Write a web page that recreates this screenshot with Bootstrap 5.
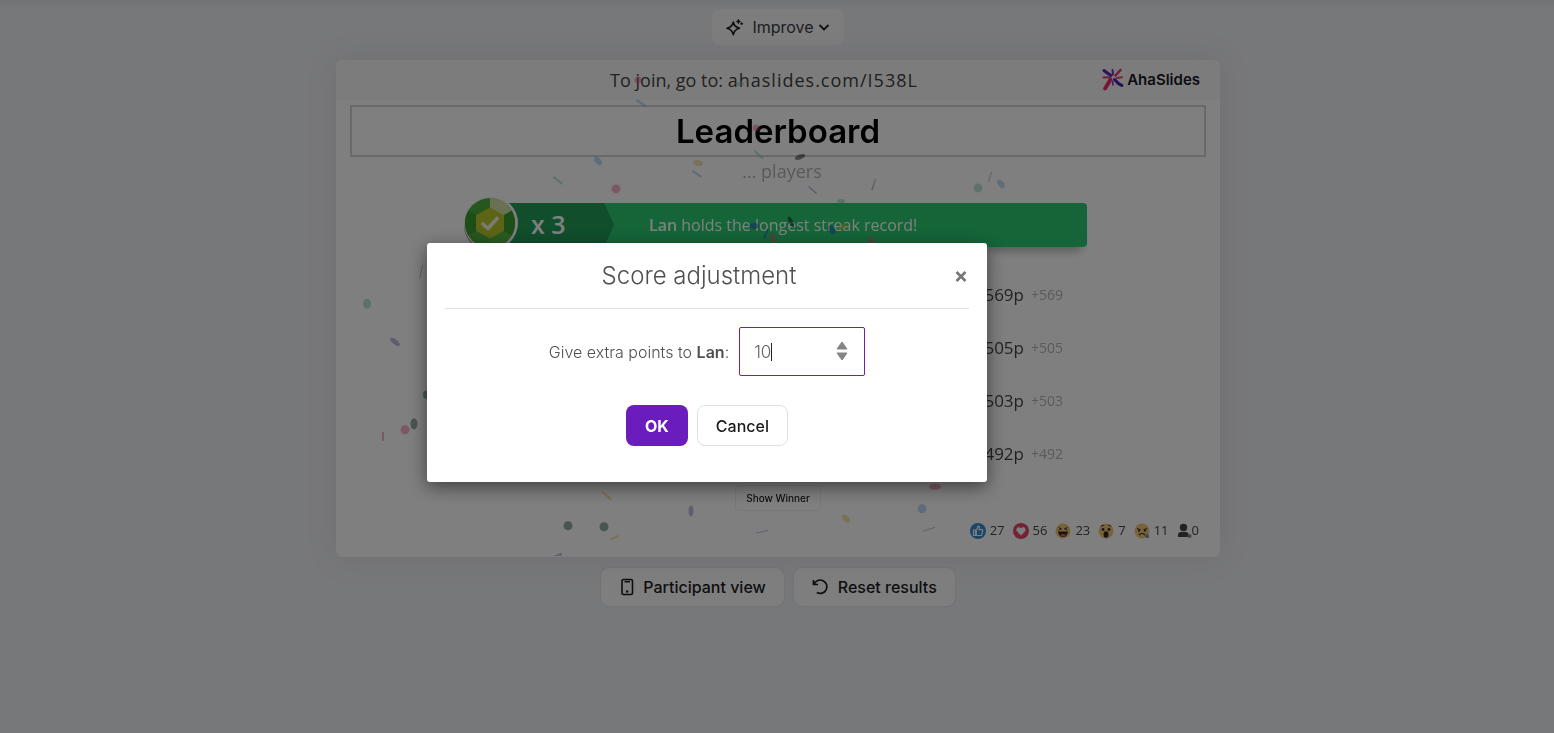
<!DOCTYPE html>
<html lang="en">
<head>
<meta charset="utf-8">
<meta name="viewport" content="width=device-width, initial-scale=1">
<title>Leaderboard</title>
<link href="https://cdn.jsdelivr.net/npm/bootstrap@5.3.0/dist/css/bootstrap.min.css" rel="stylesheet">
<style>
  :root { --ui: Inter, "Liberation Sans", sans-serif; --slide: "Open Sans", "Noto Sans", sans-serif; }
  body { min-height: 100vh; font-family: var(--ui); color: #1c1c22; background: linear-gradient(#e4e6ea, #eff0f3 8px, #eff0f4 100%) no-repeat #eff0f4; }
  .editor { padding: 9px 0 0 2px; }
  .btn-soft { --bs-btn-bg: #fdfdfe; --bs-btn-hover-bg: #fff; --bs-btn-color: #1c1c22; border: 0; border-radius: 8px; display: inline-flex; align-items: center; justify-content: center; font-size: 16px; line-height: 24px; }
  .btn-improve { --bs-btn-bg: #fafafb; --bs-btn-color: #3c3c44; height: 36px; padding: 0 14px; }
  .btn-action { height: 38px; padding: 0 18px; font-weight: 500; box-shadow: 0 0 2px rgba(0,0,0,.15); }
  .slide { width: 100%; max-width: 884px; margin-top: 15px; background: #fff; border-radius: 6px; overflow: hidden; font-family: var(--slide); color: #444; }
  .slide-wrap { filter: drop-shadow(0 0 16px rgba(0,0,30,.07)); }
  .join { height: 40px; background: #f9f9f9; font-size: 18px; }
  .join a { color: #404040; letter-spacing: 1px; font-weight: 500; text-decoration: none; }
  .join-text { margin-right: 28px; }
  .brand { position: absolute; right: 20px; gap: 3px; font: 600 15px/20px var(--ui); color: #18181f; }
  .slide-title { margin: 5px 14px 0; border: 2px solid #d2d3d6; height: 52px; font: 600 33px/48px var(--ui); color: #000; }
  .players { color: #b2b2b2; font-size: 18px; line-height: 28px; }
  .streak { position: relative; margin: 18px 133px 0 155px; height: 44px; border-radius: 4px; background: #2acb72; color: #fff; font-size: 16px; box-shadow: 0 10px 10px -6px rgba(0,0,0,.3); }
  .streak-count { width: 123px; height: 100%; padding-left: 40px; background: #209c59; clip-path: polygon(0 0, 113px 0, 100% 50%, 113px 100%, 0 100%); font-size: 25px; font-weight: 600; }
  .streak-note { margin-left: 35px; }
  .streak-badge { position: absolute; left: -28px; top: -8px; }
  .scores { margin: 21px 157px 0 0; }
  .scores li { height: 53px; font-size: 17px; }
  .scores small { color: #b4b4b4; font-size: 14px; margin-left: 7px; }
  .winner { padding-top: 4px; }
  .btn-winner { --bs-btn-color: #222; border: 1px solid #f0f0f0; font: 500 10px/24px Inter, sans-serif; padding: 0 10px; border-radius: 4px; }
  .reactions { height: 24px; margin: 8px 21px 14px 0; font-size: 13px; gap: 8px; }
  .confetti { position: absolute; inset: 0; width: 100%; height: 100%; pointer-events: none; opacity: .45; }
  .actions { gap: 10px; margin-top: 11px; }
  .score-modal { padding: 0 140px 8px 0; }
  .score-modal .modal-dialog { max-width: 560px; }
  .score-modal .modal-content { border: 0; border-radius: 3px; padding: 0 18px 36px; box-shadow: 0 5px 18px rgba(0,0,0,.5); color: #5f5f63; }
  .score-modal .modal-header { padding: 0; height: 66px; border-bottom: 1px solid #dedee2; border-radius: 0; }
  .score-modal .modal-title { font-size: 24px; font-weight: 300; line-height: 30px; color: #505054; }
  .close-x { border: 0; background: none; color: #77777b; padding: 0; width: 16px; height: 20px; }
  .points-row { margin-top: 18px; gap: 10px; }
  .points-row label { font-weight: 300; color: #505054; }
  .points-input { width: 126px; height: 49px; border: 1px solid #7020a8; border-radius: 2px; font-size: 17px; font-weight: 300; color: #63636f; padding: 0 14px; appearance: textfield; -moz-appearance: textfield; outline: 0; }
  .points-input::-webkit-inner-spin-button { appearance: none; -webkit-appearance: none; }
  .caret { position: absolute; left: 32px; top: 16px; width: 1px; height: 18px; background: #222; }
  .spin { position: absolute; right: 17px; top: 14px; }
  .modal-actions { margin-top: 29px; gap: 9px; }
  .modal-actions .btn { height: 41px; padding: 0 18px; border-radius: 8px; font-size: 16px; }
  .btn-ok { --bs-btn-bg: #6a1cbc; --bs-btn-color: #fff; --bs-btn-hover-bg: #5a12a8; --bs-btn-hover-color: #fff; font-weight: 700; }
  .btn-cancel { border: 1px solid #e0e0e4; color: #1c1c1c; font-weight: 500; }
  .modal-backdrop { --bs-backdrop-opacity: .5; }
</style>
</head>
<body>
<main class="editor d-flex flex-column align-items-center">
  <button class="btn btn-soft btn-improve" type="button">
    <svg class="me-2" width="18" height="18" viewBox="0 0 18 18" fill="none" stroke="#1c1c22" stroke-width="1.6" stroke-linejoin="round"><path d="M7.3 4Q8.2 9 13.5 10.3Q8.2 11.5 7.3 16.7Q6.2 11.5 1 10.3Q6.2 9 7.3 4Z"/><path d="M12.4 1l.6 1.8 1.7.7-1.7.7-.6 1.7-.6-1.7-1.7-.7 1.700-.7zM15.700 4.300l.4 1 1 .4-1 .4-.4 1-.4-1-1-.4 1-.4z" fill="#1c1c22" stroke-width=".6"/></svg>
    Improve
    <svg class="ms-1" width="12" height="12" viewBox="0 0 12 12" fill="none" stroke="#1c1c22" stroke-width="1.800"><path d="M1.500 4 6 8.400 10.500 4"/></svg>
  </button>

  <div class="slide-wrap w-100 d-flex justify-content-center">
  <section class="slide position-relative">
    <header class="join position-relative d-flex align-items-center justify-content-center">
      <span class="join-text">To join, go to: <a href="#">ahaslides.com/I538L</a></span>
      <span class="brand d-flex align-items-center">
        <svg width="22" height="24" viewBox="0 0 22 24" fill="none" stroke-linecap="round"><path d="M2 2.500Q5 5 9 7.500" stroke="#5928b8" stroke-width="3"/><path d="M10.500 2 11 6.500" stroke="#7a2cba" stroke-width="2"/><path d="M18.500 2 13.500 7.500" stroke="#e23a78" stroke-width="2.600"/><path d="M1.500 9.500Q5 9 8 9.500" stroke="#d63c8c" stroke-width="2"/><path d="M20 9.200 15 10" stroke="#e64c6c" stroke-width="2"/><path d="M12.500 11.500Q16 16 20 17.500" stroke="#5222b4" stroke-width="3"/><path d="M10.500 13 11 17" stroke="#8a34c4" stroke-width="1.600"/><path d="M8.500 11.500Q6 16 3 20.500" stroke="#ee2c68" stroke-width="3.800"/></svg>
        <span>AhaSlides</span>
      </span>
    </header>
    <h1 class="slide-title text-center">Leaderboard</h1>
    <div class="players text-center ps-2">... players</div>
    <div class="streak d-flex align-items-center">
      <div class="streak-count d-flex align-items-center">x 3</div>
      <div class="streak-note"><b class="fw-semibold">Lan</b> holds the longest streak record!</div>
      <svg class="streak-badge" width="56" height="56" viewBox="0 0 56 56"><ellipse cx="27" cy="31" rx="26" ry="25" fill="#b8a4b4"/><circle cx="28" cy="28" r="27" fill="#fafafa"/><circle cx="27" cy="28" r="25" fill="#4cae3c"/><path d="M27 28 5.300 15.500A25 25 0 0 0 5.300 40.500Z" fill="#3c9c30"/><path d="M27 28V53A25 25 0 0 0 48.700 40.500Z" fill="#54b840"/><path d="M27 28 48.700 15.500A25 25 0 0 1 48.700 40.500Z" fill="#3c9c30"/><path d="M27 28V3A25 25 0 0 1 48.700 15.500Z" fill="#d2e2a4"/><path d="M27 12.500 41 20.200V35.800L27 43.500 13 35.800V20.200Z" fill="#bcc82c"/><path d="m20 29 5 4.500 9-10" fill="none" stroke="#f6f6e4" stroke-width="3.600" stroke-linecap="round" stroke-linejoin="round"/></svg>
    </div>
    <ol class="scores list-unstyled mb-0">
      <li class="d-flex align-items-center justify-content-end"><span>569p</span><small>+569</small></li>
      <li class="d-flex align-items-center justify-content-end"><span>505p</span><small>+505</small></li>
      <li class="d-flex align-items-center justify-content-end"><span>503p</span><small>+503</small></li>
      <li class="d-flex align-items-center justify-content-end"><span>492p</span><small>+492</small></li>
    </ol>
    <div class="winner text-center"><button class="btn btn-winner" type="button">Show Winner</button></div>
    <div class="reactions d-flex align-items-center justify-content-end">
      <span class="d-flex align-items-center gap-1"><svg width="16" height="16" viewBox="0 0 16 16"><circle cx="8" cy="8" r="8" fill="#348ed0"/><path d="M3.500 7h2v5.500h-2zM6.300 7.200 8.200 3.200q1.600 0 1.200 1.800L9.100 6.600h2.700q1.100.2.900 1.200l-.9 3.900q-.3.800-1 .8H6.300z" fill="none" stroke="#fff" stroke-width="1.200"/></svg>27</span>
      <span class="d-flex align-items-center gap-1"><svg width="16" height="16" viewBox="0 0 16 16"><circle cx="8" cy="8" r="8" fill="#e8466c"/><path d="M8 12.500 3.900 8.300C2 5.500 5.800 2.600 8 5.600c2.200-3 6-.1 4.100 2.700z" fill="#fff"/></svg>56</span>
      <span class="d-flex align-items-center gap-1"><svg width="16" height="16" viewBox="0 0 16 16"><circle cx="8" cy="8" r="7.500" fill="#ecc674"/><path d="m3.500 4.500 3 1.300-3 1.200m9-2.500-3 1.300 3 1.200" fill="none" stroke="#43372c"/><path d="M3 8.500H13Q12 14 8 14T3 8.500Z" fill="#382424"/><path d="M5 12q3-2 6 0-3 2.800-6 0z" fill="#e0606c"/></svg>23</span>
      <span class="d-flex align-items-center gap-1"><svg width="16" height="16" viewBox="0 0 16 16"><circle cx="8" cy="8" r="7.500" fill="#ecc674"/><path d="M2.800 3.500q1.500-1.700 3-1m4.400 0q1.500-.7 3 1" fill="none" stroke="#42352a"/><circle cx="5" cy="6.500" r="1.400" fill="#332a22"/><circle cx="11" cy="6.500" r="1.400" fill="#332a22"/><ellipse cx="8" cy="11.500" rx="2.400" ry="3.300" fill="#372222"/></svg>7</span>
      <span class="d-flex align-items-center gap-1"><svg width="16" height="16" viewBox="0 0 16 16"><circle cx="8" cy="8" r="7.500" fill="#ecc674"/><path d="m3 5.500 3.500 1.300m6.500-1.300L9.500 6.800M5 12q3-3.500 6 0" fill="none" stroke="#44362a" stroke-width="1.200"/><circle cx="5" cy="7.800" r="1" fill="#332a22"/><circle cx="11" cy="7.800" r="1" fill="#332a22"/><path d="M13.500 10.500Q15.500 13 15 14.500t-3 0 1.500-4z" fill="#7490a8"/></svg>11</span>
      <span class="d-flex align-items-center"><svg width="15" height="16" viewBox="0 0 15 16"><circle cx="6.500" cy="4.500" r="3.700" fill="#444"/><path d="M1 14v-2q0-3 3-3h5q2 0 2.500 2v3z" fill="#444"/><circle cx="12.500" cy="13" r="2" fill="#888"/></svg>0</span>
    </div>
    <svg class="confetti" viewBox="0 0 884 497" preserveAspectRatio="none">
      <g fill="#f05090"><circle cx="302" cy="20" r="3.500"/><circle cx="420" cy="68" r="3.500"/><circle cx="280" cy="129" r="4.500"/><circle cx="69" cy="370" r="4.500"/><rect x="46" y="372" width="2" height="9"/><ellipse cx="599" cy="427" rx="6" ry="3"/><ellipse cx="437" cy="178" rx="3" ry="5" transform="rotate(-30 437 178)"/><circle cx="535" cy="181" r="4"/></g>
      <g fill="#64c8a0"><ellipse cx="404" cy="24" rx="4" ry="2"/><circle cx="642" cy="128" r="4.500"/><ellipse cx="31" cy="244" rx="4" ry="5"/><ellipse cx="505" cy="141" rx="4" ry="2"/><path d="m218 116 9 7-1 2-9-7zM419 90l9 8-2 1-8-7z"/></g>
      <g fill="#70b0ec"><ellipse cx="262" cy="101" rx="3" ry="5" transform="rotate(-40 262 101)"/><ellipse cx="665" cy="124" rx="3" ry="5" transform="rotate(-40 665 124)"/><circle cx="586" cy="449" r="4.500"/><path d="m357 110 9 6-1 2-9-6zM301 39l9 6-1 2-9-6z"/></g>
      <g fill="#eec050"><ellipse cx="362" cy="103" rx="5" ry="3" transform="rotate(15 362 103)"/><ellipse cx="510" cy="459" rx="5" ry="3" transform="rotate(40 510 459)"/><path d="m267 431 9 8-2 2-8-8zM274 479l8-4 1 2-8 4z"/><ellipse cx="507" cy="167" rx="5" ry="3"/></g>
      <g fill="#2448d8"><ellipse cx="418" cy="166" rx="5" ry="3"/><ellipse cx="496" cy="170" rx="3" ry="5" transform="rotate(-30 496 170)"/><path d="M427 178l4-9 2 0-4 10z"/></g>
      <g fill="#6c70aa"><ellipse cx="355" cy="451" rx="2.500" ry="5.500"/><ellipse cx="59" cy="282" rx="2.500" ry="6" transform="rotate(-50 59 282)"/><path d="m535 130 4-11 1 0-3 11zM473 126l8 7-1 1-8-7zM652 122l3-10 1 0-3 10zM420 473l12-3v1l-12 3zM587 471l12-4v1l-12 4zM217 496l9-3v3zM83 219l3-14 1 0-3 14z"/></g>
      <g fill="#12443a"><ellipse cx="78" cy="364" rx="3.500" ry="5.500"/><circle cx="232" cy="466" r="4.500"/><circle cx="268" cy="467" r="4.500"/><ellipse cx="90" cy="335" rx="3" ry="4"/></g>
      <g fill="#000"><ellipse cx="464" cy="97" rx="5.500" ry="2.500" transform="rotate(-20 464 97)"/><ellipse cx="455" cy="162" rx="2" ry="6" transform="rotate(-25 455 162)"/></g>
    </svg>
  </section>
  </div>

  <div class="actions d-flex">
    <button class="btn btn-soft btn-action" type="button"><svg class="me-2" width="16" height="18" viewBox="0 0 16 18" fill="none" stroke="#1c1c22" stroke-width="1.600"><rect x="3" y="1.500" width="10.500" height="15" rx="1.500"/><path d="M5.500 3.700h5.500"/><circle cx="8.200" cy="13.500" r=".5"/></svg>Participant view</button>
    <button class="btn btn-soft btn-action" type="button"><svg class="me-2" width="18" height="18" viewBox="0 0 18 18" fill="none" stroke="#1c1c22" stroke-width="1.700"><path d="M1.500 2v4.500H6M2 6.200A6.700 6.700 0 1 1 4.800 14.500"/></svg>Reset results</button>
  </div>
</main>

<div class="modal-backdrop show"></div>
<div class="modal score-modal d-block" role="dialog" aria-modal="true" aria-labelledby="scoreTitle">
  <div class="modal-dialog modal-dialog-centered">
    <form class="modal-content">
      <div class="modal-header">
        <h2 class="modal-title flex-grow-1 text-center" id="scoreTitle">Score adjustment</h2>
        <button class="close-x" type="button" aria-label="Close"><svg class="d-block" width="16" height="20" viewBox="0 0 16 20" stroke="currentColor" stroke-width="2.600"><path d="m3.500 6 9 9m0-9-9 9"/></svg></button>
      </div>
      <div class="points-row d-flex align-items-center justify-content-center">
        <label for="points">Give extra points to <b class="fw-semibold">Lan</b>:</label>
        <span class="position-relative">
          <input class="points-input d-block" id="points" type="number" value="10">
          <span class="caret"></span>
          <svg class="spin" width="12" height="20" viewBox="0 0 12 20" fill="#858589"><path d="M6 1 11 8H1zM1 12h10l-5 7z" stroke="#858589" stroke-linejoin="round"/></svg>
        </span>
      </div>
      <div class="modal-actions d-flex justify-content-center">
        <button class="btn btn-ok" type="button">OK</button>
        <button class="btn btn-cancel" type="button">Cancel</button>
      </div>
    </form>
  </div>
</div>
<script src="https://cdn.jsdelivr.net/npm/bootstrap@5.3.0/dist/js/bootstrap.bundle.min.js"></script>
</body>
</html>
